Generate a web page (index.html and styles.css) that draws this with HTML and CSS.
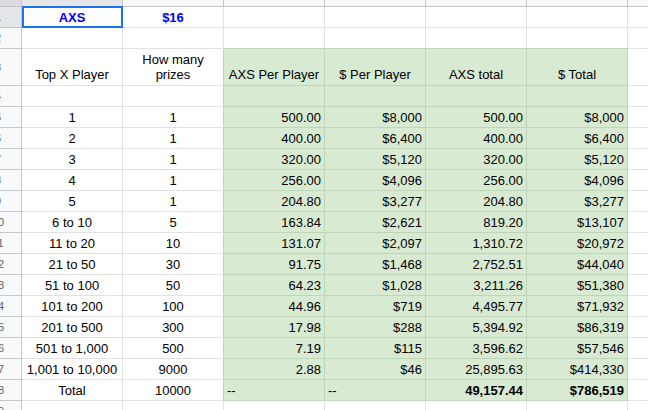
FILE: index.html
```html
<!DOCTYPE html>
<html>
<head>
<meta charset="utf-8">
<link rel="stylesheet" href="styles.css">
</head>
<body>
<div class="sheet">
  <div class="row hdr">
    <div class="rh corner"></div>
    <div class="ch sel"></div><div class="ch"></div><div class="ch"></div><div class="ch"></div><div class="ch"></div><div class="ch"></div><div class="ch"></div>
  </div>
  <div class="row">
    <div class="rh sel">1</div>
    <div class="c ctr blue selected">AXS<span class="selbox"></span></div><div class="c ctr blue">$16</div><div class="c"></div><div class="c"></div><div class="c"></div><div class="c"></div><div class="c"></div>
  </div>
  <div class="row">
    <div class="rh">2</div>
    <div class="c"></div><div class="c"></div><div class="c gt"></div><div class="c gt"></div><div class="c gt"></div><div class="c gt"></div><div class="c"></div>
  </div>
  <div class="row tall">
    <div class="rh">3</div>
    <div class="c ctr">Top X Player</div><div class="c ctr gb">How many<br>prizes</div><div class="c ctr g">AXS Per Player</div><div class="c ctr g">$ Per Player</div><div class="c ctr g">AXS total</div><div class="c ctr g">$ Total</div><div class="c"></div>
  </div>
  <div class="row">
    <div class="rh">4</div>
    <div class="c"></div><div class="c gb"></div><div class="c g"></div><div class="c g"></div><div class="c g"></div><div class="c g"></div><div class="c"></div>
  </div>
  <div class="row"><div class="rh">5</div><div class="c ctr">1</div><div class="c ctr gb">1</div><div class="c num g">500.00</div><div class="c num g">$8,000</div><div class="c num g">500.00</div><div class="c num g">$8,000</div><div class="c"></div></div>
  <div class="row"><div class="rh">6</div><div class="c ctr">2</div><div class="c ctr gb">1</div><div class="c num g">400.00</div><div class="c num g">$6,400</div><div class="c num g">400.00</div><div class="c num g">$6,400</div><div class="c"></div></div>
  <div class="row"><div class="rh">7</div><div class="c ctr">3</div><div class="c ctr gb">1</div><div class="c num g">320.00</div><div class="c num g">$5,120</div><div class="c num g">320.00</div><div class="c num g">$5,120</div><div class="c"></div></div>
  <div class="row"><div class="rh">8</div><div class="c ctr">4</div><div class="c ctr gb">1</div><div class="c num g">256.00</div><div class="c num g">$4,096</div><div class="c num g">256.00</div><div class="c num g">$4,096</div><div class="c"></div></div>
  <div class="row"><div class="rh">9</div><div class="c ctr">5</div><div class="c ctr gb">1</div><div class="c num g">204.80</div><div class="c num g">$3,277</div><div class="c num g">204.80</div><div class="c num g">$3,277</div><div class="c"></div></div>
  <div class="row"><div class="rh">10</div><div class="c ctr">6 to 10</div><div class="c ctr gb">5</div><div class="c num g">163.84</div><div class="c num g">$2,621</div><div class="c num g">819.20</div><div class="c num g">$13,107</div><div class="c"></div></div>
  <div class="row"><div class="rh">11</div><div class="c ctr">11 to 20</div><div class="c ctr gb">10</div><div class="c num g">131.07</div><div class="c num g">$2,097</div><div class="c num g">1,310.72</div><div class="c num g">$20,972</div><div class="c"></div></div>
  <div class="row"><div class="rh">12</div><div class="c ctr">21 to 50</div><div class="c ctr gb">30</div><div class="c num g">91.75</div><div class="c num g">$1,468</div><div class="c num g">2,752.51</div><div class="c num g">$44,040</div><div class="c"></div></div>
  <div class="row"><div class="rh">13</div><div class="c ctr">51 to 100</div><div class="c ctr gb">50</div><div class="c num g">64.23</div><div class="c num g">$1,028</div><div class="c num g">3,211.26</div><div class="c num g">$51,380</div><div class="c"></div></div>
  <div class="row"><div class="rh">14</div><div class="c ctr">101 to 200</div><div class="c ctr gb">100</div><div class="c num g">44.96</div><div class="c num g">$719</div><div class="c num g">4,495.77</div><div class="c num g">$71,932</div><div class="c"></div></div>
  <div class="row"><div class="rh">15</div><div class="c ctr">201 to 500</div><div class="c ctr gb">300</div><div class="c num g">17.98</div><div class="c num g">$288</div><div class="c num g">5,394.92</div><div class="c num g">$86,319</div><div class="c"></div></div>
  <div class="row"><div class="rh">16</div><div class="c ctr">501 to 1,000</div><div class="c ctr gb">500</div><div class="c num g">7.19</div><div class="c num g">$115</div><div class="c num g">3,596.62</div><div class="c num g">$57,546</div><div class="c"></div></div>
  <div class="row"><div class="rh">17</div><div class="c ctr">1,001 to 10,000</div><div class="c ctr gb">9000</div><div class="c num g">2.88</div><div class="c num g">$46</div><div class="c num g">25,895.63</div><div class="c num g">$414,330</div><div class="c"></div></div>
  <div class="row"><div class="rh">18</div><div class="c ctr">Total</div><div class="c ctr gb">10000</div><div class="c g">--</div><div class="c g">--</div><div class="c num g b">49,157.44</div><div class="c num g b">$786,519</div><div class="c"></div></div>
  <div class="row"><div class="rh">19</div><div class="c"></div><div class="c"></div><div class="c"></div><div class="c"></div><div class="c"></div><div class="c"></div><div class="c"></div></div>
</div>
</body>
</html>
```
FILE: styles.css
```css
html, body {
  margin: 0;
  padding: 0;
  background: #fff;
  overflow: hidden;
}
.sheet {
  margin-left: -25px;
  font-family: "Liberation Sans", Arial, sans-serif;
  font-size: 13px;
  color: #000;
}
.row {
  display: flex;
  height: 21px;
}
.row.hdr {
  height: 7px;
}
.row.tall {
  height: 37px;
}
.rh {
  flex: 0 0 47px;
  box-sizing: border-box;
  background: #f8f9fa;
  border-right: 1px solid #c4c7c5;
  border-bottom: 1px solid #c4c7c5;
  color: #5f6368;
  font-size: 11px;
  display: flex;
  align-items: center;
  justify-content: center;
  overflow: hidden;
}
.rh.sel {
  background: #e3e5e8;
  color: #444;
}
.rh.corner {
  background: #dadce0;
}
.ch {
  flex: 0 0 101px;
  box-sizing: border-box;
  background: #f8f9fa;
  border-right: 1px solid #c4c7c5;
  border-bottom: 1px solid #c4c7c5;
}
.ch.sel {
  background: #e3e5e8;
}
.c {
  position: relative;
  flex: 0 0 101px;
  box-sizing: border-box;
  border-right: 1px solid #e2e2e2;
  border-bottom: 1px solid #e2e2e2;
  padding: 0 3px 1px;
  line-height: 16px;
  display: flex;
  align-items: flex-end;
  white-space: nowrap;
}
.row.tall .c {
  line-height: 15px;
  padding-bottom: 3px;
}
.ctr {
  justify-content: center;
  text-align: center;
}
.num {
  justify-content: flex-end;
}
.g {
  background: #d9ead3;
  border-right-color: #bfd4b8;
  border-bottom-color: #bfd4b8;
}
.gb {
  border-right-color: #bfd4b8;
}
.gt {
  border-bottom-color: #bfd4b8;
}
.b {
  font-weight: bold;
}
.blue {
  color: #0000ff;
  font-weight: bold;
}
.selbox {
  position: absolute;
  top: -1px;
  left: 0;
  right: -1px;
  bottom: -1px;
  border: 2px solid #1a73e8;
  pointer-events: none;
}
```
